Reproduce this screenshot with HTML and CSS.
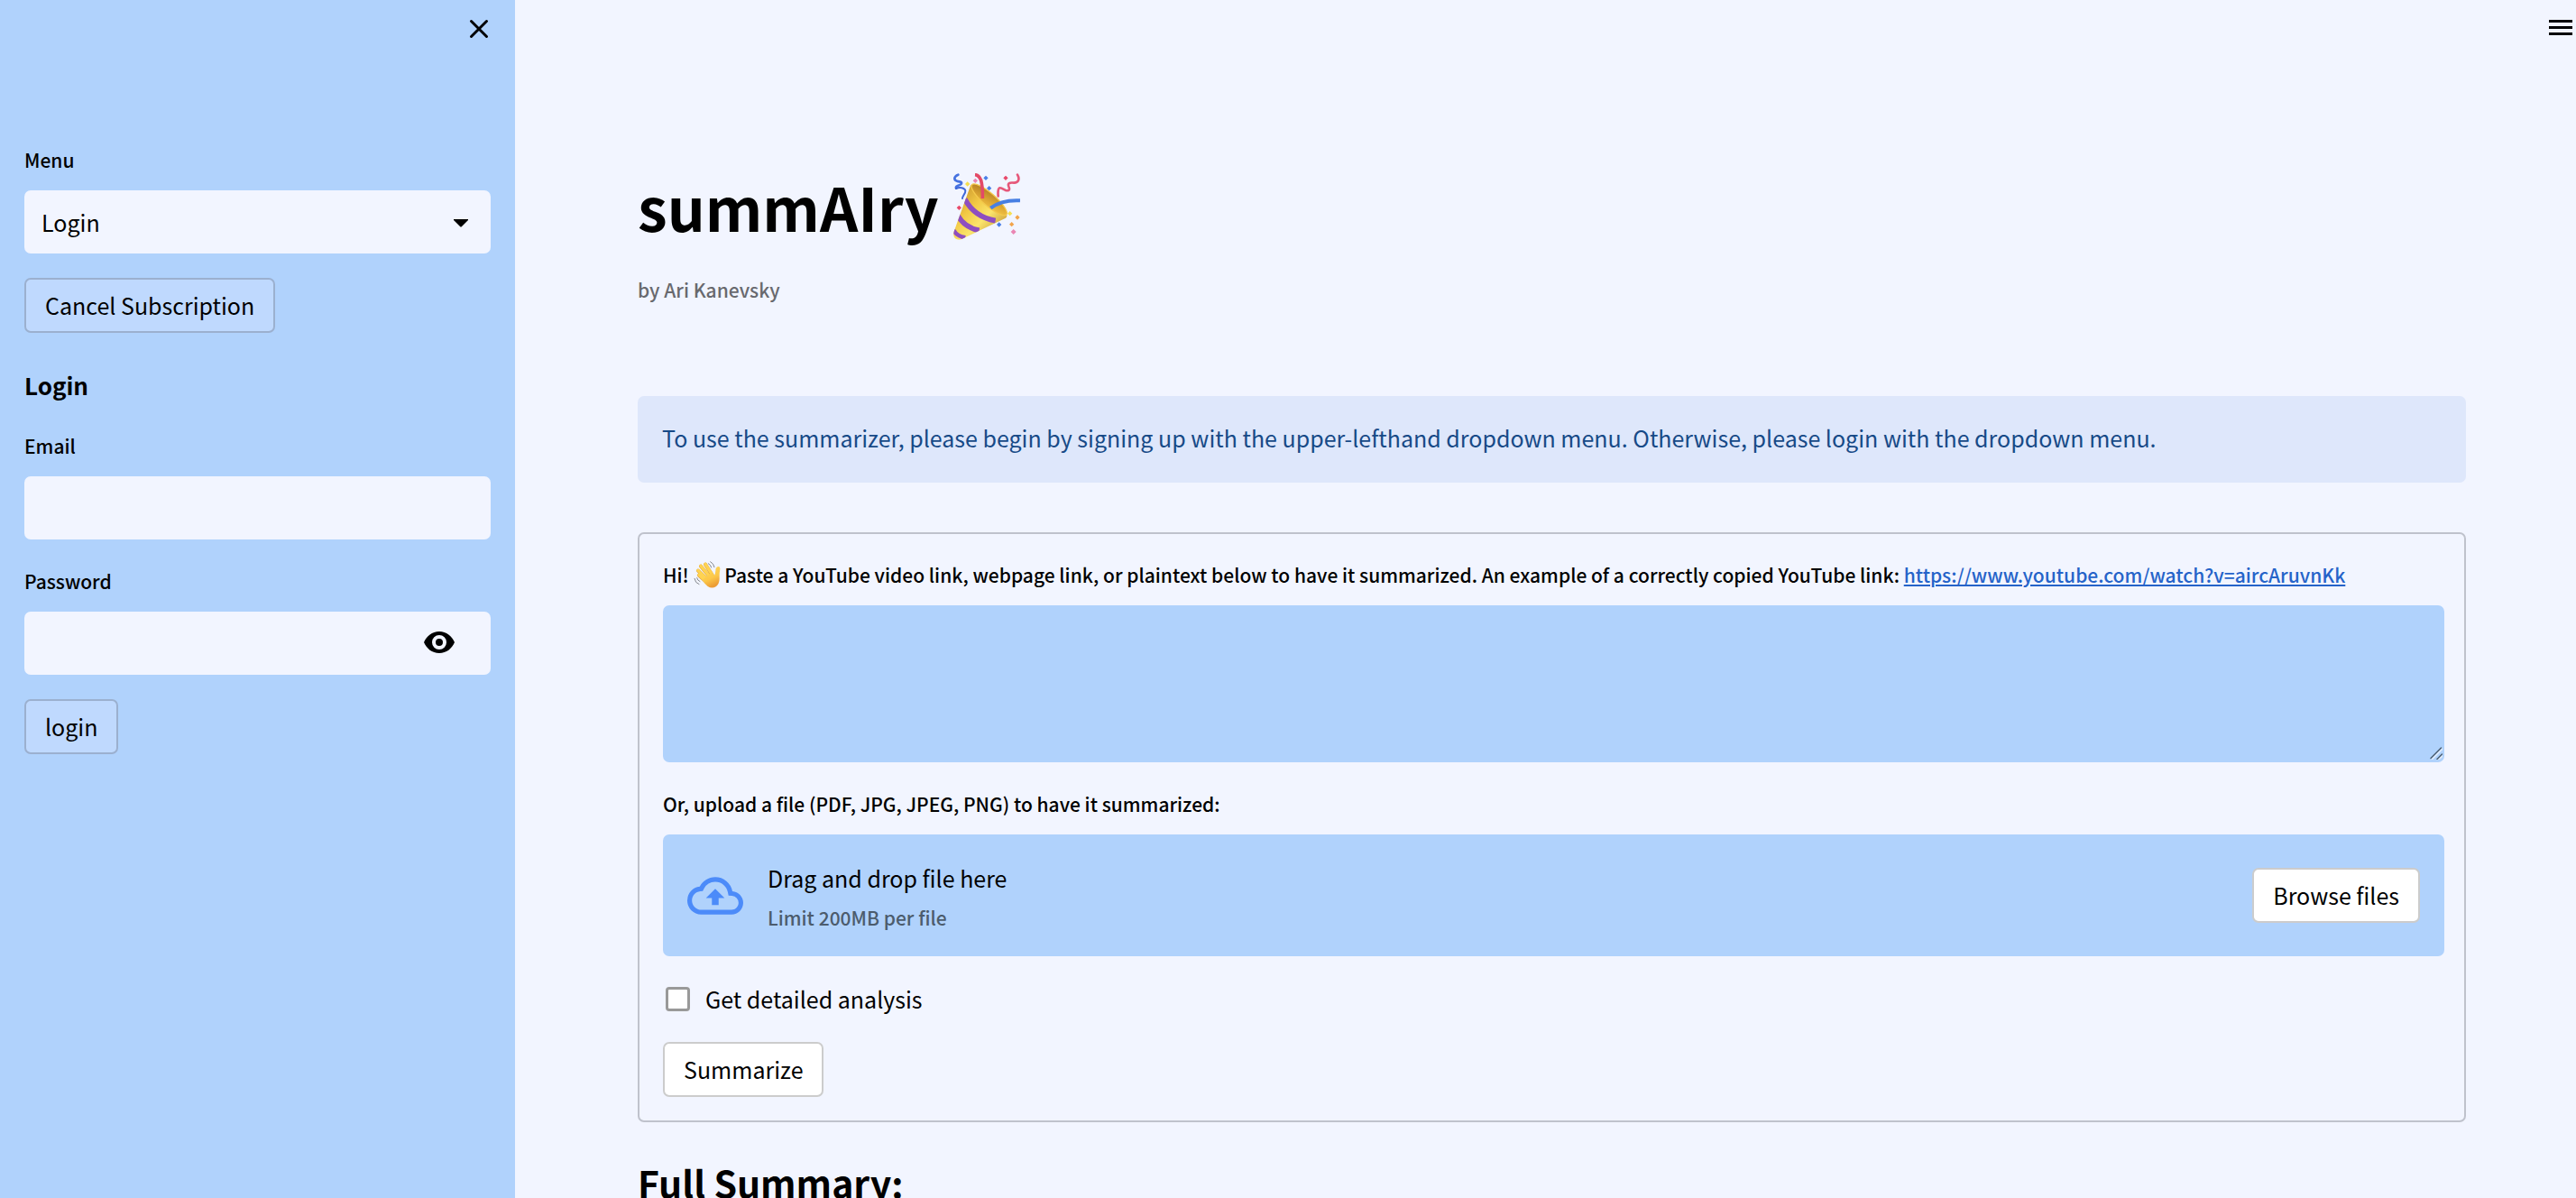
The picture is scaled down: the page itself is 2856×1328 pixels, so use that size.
FILE: index.html
```html
<!doctype html>
<html lang="en">
    <head>
        <meta charset="utf-8">
        <meta name="viewport" content="width=device-width, initial-scale=1">
        <title>summAIry</title>
        <link rel="stylesheet" href="styles.css">
    </head>
    <body>
        <aside class="sidebar">
            <div class="sidebar-header">
                <button type="button" class="icon-button" aria-label="Close sidebar">
                    <svg width="28" height="28" viewBox="0 0 28 28" fill="none" stroke="currentColor" stroke-width="3" stroke-linecap="round">
                        <path d="M5.500 5.500l17 17M22.500 5.500l-17 17"/>
                    </svg>
                </button>
            </div>
            <div class="sidebar-content">
                <div class="field">
                    <label for="menu">Menu</label>
                    <div class="control">
                        <select id="menu" name="menu">
                            <option selected>Login</option>
                            <option>Sign Up</option>
                        </select>
                        <svg class="caret" width="16" height="9" viewBox="0 0 16 9"><path d="M0 0h16v1L9 8q-1 1-2 0L0 1z"/></svg>
                    </div>
                </div>
                <button type="button" class="button button-sidebar">Cancel Subscription</button>
                <h3>Login</h3>
                <div class="field">
                    <label for="email">Email</label>
                    <input type="text" id="email" name="email">
                </div>
                <div class="field">
                    <label for="password">Password</label>
                    <div class="control">
                        <input type="password" id="password" name="password">
                        <button type="button" class="icon-button show-password" aria-label="Show password">
                            <svg width="34" height="24" viewBox="0 0 34 24">
                                <path fill-rule="evenodd" d="M17 0C9 0 3 5 0 12c3 7 9 12 17 12s14-5 17-12C31 5 25 0 17 0zm0 20a8 8 0 1 1 0-16 8 8 0 0 1 0 16zm0-4a4 4 0 1 0 0-8 4 4 0 0 0 0 8z"/>
                            </svg>
                        </button>
                    </div>
                </div>
                <button type="submit" class="button button-sidebar">login</button>
            </div>
        </aside>
        <main>
            <button type="button" class="icon-button main-menu" aria-label="Main menu">
                <svg width="26" height="18" viewBox="0 0 26 18"><path d="M0 0h26v3H0zM0 7h26v3H0zM0 14h26v3H0z"/></svg>
            </button>
            <h1>
                summAIry
                <svg class="party" viewBox="0 0 222 222" role="img" aria-label="party popper">
                    <defs>
                        <linearGradient id="cone" x1="0" y1="0.300" x2="0.700" y2="1">
                            <stop offset="0" stop-color="#c8922a"/>
                            <stop offset="0.350" stop-color="#f2c945"/>
                            <stop offset="0.600" stop-color="#fbe56c"/>
                            <stop offset="1" stop-color="#b98428"/>
                        </linearGradient>
                        <linearGradient id="rim" x1="0" y1="0" x2="1" y2="1">
                            <stop offset="0" stop-color="#a8741f"/>
                            <stop offset="0.600" stop-color="#e0aa34"/>
                            <stop offset="1" stop-color="#f7cf4c"/>
                        </linearGradient>
                        <clipPath id="cone-clip">
                            <path d="M58 38L2 194Q-3 214 12 220Q20 223 30 218L174 149Q182 144 176 134z"/>
                        </clipPath>
                    </defs>
                    <g clip-path="url(#cone-clip)">
                        <path fill="url(#cone)" d="M0 0h222v222H0z"/>
                        <path fill="none" stroke="#8e4ec0" stroke-width="17" d="M38 86Q70 146 140 158"/>
                        <path fill="none" stroke="#8e4ec0" stroke-width="17" d="M14 140Q38 182 86 190"/>
                        <path fill="none" stroke="#8e4ec0" stroke-width="14" d="M0 188Q10 210 40 214"/>
                    </g>
                    <ellipse cx="119" cy="88" rx="76" ry="21" transform="rotate(41 119 88)" fill="url(#rim)" stroke="#f4c84c" stroke-width="4"/>
                    <g fill="none" stroke-linecap="round">
                        <path stroke="#4672e0" stroke-width="8" d="M16 5C2 10 0 22 12 26C24 30 30 28 26 36C22 42 6 40 9 50"/>
                        <path stroke="#3f67d8" stroke-width="6" d="M9 51C20 45 38 48 40 58C41 67 30 76 30 84"/>
                        <path stroke="#e34a67" stroke-width="11" stroke-linecap="butt" d="M72 5Q85 6 92 24Q98 48 97 84"/>
                        <path stroke="#e6587a" stroke-width="8" d="M213 5C222 20 216 32 202 32C186 30 180 34 184 44C190 58 182 60 172 56C158 48 146 38 149 76"/>
                        <path stroke="#477fe3" stroke-width="12" stroke-linecap="butt" d="M124 116Q160 88 222 91"/>
                    </g>
                    <g fill="#4a7fe8">
                        <path d="M108 8l8 8-8 8-8-8zM119 42l8 8-8 8-8-8zM152 163l8 8-8 8-8-8z"/>
                    </g>
                    <g fill="#e8486a"><path d="M174 8l8 8-8 8-8-8zM19 107l8 8-8 8-8-8z"/></g>
                    <g fill="#ea86b4"><path d="M73 17l8 8-8 8-8-8zM200 186l9 9-9 9-9-9z"/></g>
                    <g fill="#f6df50"><path d="M47 28l8 8-8 8-8-8zM188 126l8 8-8 8-8-8z"/></g>
                    <g fill="#f2a44c"><path d="M213 139l8 8-8 8-8-8zM194 162l8 8-8 8-8-8z"/></g>
                </svg>
            </h1>
            <p class="caption">by Ari Kanevsky</p>
            <div class="info">To use the summarizer, please begin by signing up with the upper-lefthand dropdown menu. Otherwise, please login with the dropdown menu.</div>
            <form class="summary-form">
                <div class="field">
                    <label for="text">Hi!
                        <svg class="wave" viewBox="0 0 88 90" role="img" aria-label="waving hand">
                            <defs>
                                <linearGradient id="skin" x1="0" y1="0" x2="0.400" y2="1">
                                    <stop offset="0" stop-color="#ffdc5c"/>
                                    <stop offset="0.650" stop-color="#fcc748"/>
                                    <stop offset="1" stop-color="#ec9c35"/>
                                </linearGradient>
                            </defs>
                            <path fill="none" stroke="#e0a23c" stroke-width="12" stroke-linecap="round" d="M17 47L42 70M14 32L45 62M23 17L52 52M38 11L61 46"/>
                            <path fill="none" stroke="#ffd351" stroke-width="10" stroke-linecap="round" d="M17 46L42 69M14 31L45 61M23 16L52 51M38 10L61 45"/>
                            <path fill="url(#skin)" d="M38 54L58 38Q66 44 68 48Q71 43 72 32Q72 20 81 18Q88 18 87 27Q84 42 85 58Q85 76 73 85Q60 93 46 84Q36 76 28 63z"/>
                            <g fill="none" stroke="#85878d" stroke-width="3" stroke-linecap="round">
                                <path d="M48 8Q56 12 58 21M55 2Q66 8 68 20M10 56Q11 64 20 68M2 58Q4 73 17 77"/>
                            </g>
                        </svg>
                        Paste a YouTube video link, webpage link, or plaintext below to have it summarized. An example of a correctly copied YouTube link: <a href="https://www.youtube.com/watch?v=aircAruvnKk">https://www.youtube.com/watch?v=aircAruvnKk</a></label>
                    <div class="control">
                        <textarea id="text" name="text"></textarea>
                        <svg class="resizer" width="14" height="14" viewBox="0 0 14 14" fill="none" stroke-linecap="round">
                            <path stroke="#e6effb" stroke-width="1.500" d="M2 14L14 2M9 14.500L14.500 9.500"/>
                            <path stroke="#4d6073" stroke-width="1.500" d="M1 12.500L12.500 1M8 13.500L13.500 8"/>
                        </svg>
                    </div>
                </div>
                <div class="field">
                    <label for="file">Or, upload a file (PDF, JPG, JPEG, PNG) to have it summarized:</label>
                    <div class="dropzone">
                        <svg class="cloud" viewBox="0 0 24 24">
                            <path d="M19.350 10.040A7.490 7.490 0 0 0 12 4C9.110 4 6.600 5.640 5.350 8.040A5.994 5.994 0 0 0 0 14c0 3.310 2.690 6 6 6h13c2.760 0 5-2.240 5-5 0-2.640-2.050-4.780-4.650-4.960zM19 18H6c-2.210 0-4-1.790-4-4 0-2.050 1.530-3.760 3.560-3.970l1.070-.110.500-.950A5.469 5.469 0 0 1 12 6c2.620 0 4.880 1.860 5.390 4.430l.300 1.500 1.530.110A2.980 2.980 0 0 1 22 15c0 1.650-1.350 3-3 3zM8 13h2.550v3h2.900v-3H16l-4-4z"/>
                        </svg>
                        <div class="dropzone-text">
                            <span>Drag and drop file here</span>
                            <small>Limit 200MB per file</small>
                        </div>
                        <input type="file" id="file" name="file" accept=".pdf,.jpg,.jpeg,.png" hidden>
                        <button type="button" class="button" id="browse">Browse files</button>
                    </div>
                </div>
                <label class="checkbox">
                    <input type="checkbox" name="detailed">
                    Get detailed analysis
                </label>
                <button type="submit" class="button">Summarize</button>
            </form>
            <h2>Full Summary:</h2>
        </main>
        <script>
            document.getElementById('browse').addEventListener('click', () => {
                document.getElementById('file').click();
            });
        </script>
    </body>
</html>
```

FILE: styles.css
```css
:root {
    --color-background: #f2f5ff;
    --color-secondary: #b0d2fc;
    --color-primary: #4c8bf9;
    --font-size: 25px;
    --font-size-small: 21px;
    --radius: 7px;
}

* {
    box-sizing: border-box;
}

body {
    display: flex;
    height: 100vh;
    margin: 0;
    overflow: hidden;
    background-color: var(--color-background);
    color: #000;
    font-family: "Noto Sans CJK SC", "Noto Sans", sans-serif;
    font-size: var(--font-size);
    line-height: 42px;
}

h1, h2, h3, p {
    margin: 0;
}

input, select, textarea, button {
    font: inherit;
    color: inherit;
}

svg {
    display: block;
    flex-shrink: 0;
}

/* Sidebar */
.sidebar {
    flex: 0 0 571px;
    background-color: var(--color-secondary);
}

.sidebar-header {
    display: flex;
    justify-content: flex-end;
    height: 158px;
    padding: 18px 26px;
}

.sidebar-content {
    display: flex;
    flex-direction: column;
    align-items: flex-start;
    gap: 27px;
    padding: 0 27px;
}

.sidebar h3 {
    padding-top: 10px;
    font-size: 26px;
    line-height: 42px;
}

/* Controls */
.field {
    width: 100%;
}

.field label {
    display: block;
    margin-bottom: 15px;
    font-size: var(--font-size-small);
    font-weight: 500;
    line-height: 38px;
}

.control {
    position: relative;
}

.field select,
.control input,
.field > input,
.field textarea {
    display: block;
    width: 100%;
    height: 70px;
    padding: 0 19px;
    border: none;
    border-radius: var(--radius);
    background-color: var(--color-background);
    appearance: none;
}

.field textarea {
    height: 174px;
    padding: 19px;
    background-color: var(--color-secondary);
    resize: vertical;
}

textarea::-webkit-resizer {
    display: none;
}

.caret {
    position: absolute;
    top: 32px;
    right: 25px;
    pointer-events: none;
}

.resizer {
    position: absolute;
    right: 2px;
    bottom: 3px;
    pointer-events: none;
}

.icon-button {
    height: max-content;
    padding: 0;
    border: none;
    background: none;
    cursor: pointer;
}

.show-password {
    position: absolute;
    top: 22px;
    right: 40px;
}

.button {
    height: 61px;
    padding: 0 21px 2px;
    border: 2px solid #ccc;
    border-radius: var(--radius);
    background-color: #fff;
    white-space: nowrap;
    cursor: pointer;
}

.button-sidebar {
    border-color: #9bb0cf;
    background-color: #bfd9fe;
}

.button:hover {
    border-color: var(--color-primary);
    color: var(--color-primary);
}

/* Main */
main {
    position: relative;
    flex: 1;
    padding: 183px 122px 0 136px;
}

.main-menu {
    position: absolute;
    top: 22px;
    right: 4px;
}

h1 {
    display: flex;
    align-items: center;
    gap: 16px;
    font-size: 66px;
    line-height: 90px;
}

.party {
    width: 74px;
    height: 74px;
    margin-top: 2px;
}

.caption {
    margin-top: 29px;
    color: #68696e;
    font-size: var(--font-size-small);
    font-weight: 500;
    line-height: 38px;
}

.info {
    margin-top: 99px;
    padding: 25px 27px 29px;
    border-radius: var(--radius);
    background-color: #dee7fb;
    color: #174a87;
}

.summary-form {
    display: flex;
    flex-direction: column;
    align-items: flex-start;
    gap: 27px;
    margin-top: 55px;
    padding: 26px 22px 26px 26px;
    border: 2px solid #bfc2cc;
    border-radius: var(--radius);
}

.wave {
    display: inline-block;
    width: 30px;
    height: 30px;
    vertical-align: -6px;
}

.field a {
    color: #2563c9;
}

.dropzone {
    display: flex;
    align-items: center;
    gap: 27px;
    height: 135px;
    padding: 0 27px;
    border-radius: var(--radius);
    background-color: var(--color-secondary);
}

.cloud {
    width: 62px;
    height: 62px;
    fill: var(--color-primary);
}

.dropzone-text {
    display: flex;
    flex-direction: column;
    flex: 1;
    gap: 4px;
    padding-top: 3px;
}

.dropzone-text small {
    color: #4c5c6d;
    font-size: var(--font-size-small);
    font-weight: 500;
    line-height: 38px;
}

.checkbox {
    display: flex;
    align-items: center;
    gap: 17px;
    padding-left: 3px;
    line-height: 41px;
}

.checkbox input {
    width: 27px;
    height: 27px;
    margin: 0;
    border: 3px solid #999;
    border-radius: 4px;
    background-color: #fff;
    appearance: none;
}

.checkbox input:checked {
    border-color: var(--color-primary);
    background-color: var(--color-primary);
}

h2 {
    margin-top: 37px;
    font-size: 41px;
    line-height: 58px;
    white-space: nowrap;
}
```
